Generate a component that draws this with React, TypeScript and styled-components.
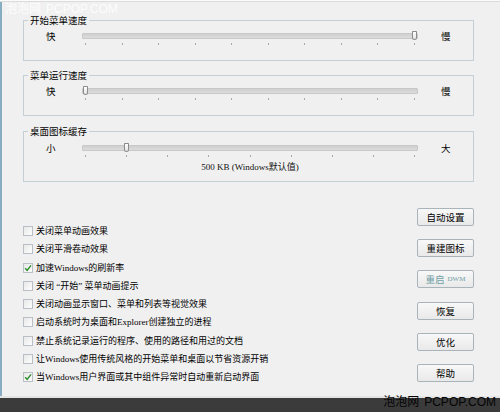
import React from "react";
import styled, { createGlobalStyle } from "styled-components";

const Global = createGlobalStyle`
  html, body { margin: 0; padding: 0; background: #f0f0f0; }
  body {
    width: 500px; height: 412px; overflow: hidden;
    font-family: "Liberation Serif", "Noto Sans CJK SC", serif;
    color: #151515;
  }
`;

const Window = styled.div`
  position: relative;
  width: 500px;
  height: 412px;
  display: flex;
  flex-direction: column;
  background: #f0f0f0;
  overflow: hidden;
`;

const TopEdge = styled.div`
  height: 1px;
  background: #fbfbfb;
  border-bottom: 1px solid #dcdcdc;
`;

const Body = styled.div`
  flex: 1;
  border-left: 2px solid #86adc1;
  padding: 12px 0 0 21px;
  display: flex;
  flex-direction: column;
`;

const BottomEdge = styled.div`
  height: 2px;
  background: #e4e4e4;
`;

const DarkBar = styled.div`
  height: 14px;
  background: #3b3b3b;
`;

const Group = styled.fieldset<{ $mt?: number }>`
  margin: ${(p) => p.$mt ?? 0}px 0 0 0;
  padding: 0;
  width: 451px;
  box-sizing: border-box;
  border: 1px solid #c3ced5;
  min-width: 0;
`;

const Legend = styled.legend`
  margin-left: 4px;
  padding: 0 2px;
  font-family: "Noto Sans CJK SC", sans-serif;
  font-size: 9.5px;
  line-height: 12px;
  color: #000;
`;

const SliderRow = styled.div<{ $pt: number; $pb: number }>`
  display: flex;
  align-items: flex-start;
  padding: ${(p) => p.$pt}px 0 ${(p) => p.$pb}px 22px;
`;

const EndLabel = styled.span<{ $ml: number }>`
  width: 9px;
  margin-left: ${(p) => p.$ml}px;
  margin-top: -1px;
  font-family: "Noto Sans CJK SC", sans-serif;
  font-size: 9.5px;
  line-height: 9px;
  color: #000;
  white-space: nowrap;
`;

const SliderCol = styled.div`
  width: 336px;
  margin-left: 27px;
  display: flex;
  flex-direction: column;
`;

const TrackWrap = styled.div`
  position: relative;
  height: 6px;
`;

const Track = styled.div`
  height: 6px;
  box-sizing: border-box;
  border: 1px solid #c8c8c8;
  border-radius: 1px;
  background: linear-gradient(#cfcfcf, #dcdcdc);
`;

const Thumb = styled.div`
  position: absolute;
  top: -2px;
  width: 5px;
  height: 9px;
  box-sizing: border-box;
  border: 1px solid #8c8c8c;
  border-radius: 1px 1px 3px 3px;
  background: linear-gradient(#ffffff, #e4e4e4);
`;

const Ticks = styled.div`
  margin-top: 4px;
  padding: 0 3px;
  display: flex;
  justify-content: space-between;
`;

const Tick = styled.span`
  width: 1px;
  height: 2px;
  background: #a8a8a8;
`;

const ValueText = styled.div`
  margin-top: 5px;
  text-align: center;
  font-size: 9px;
  line-height: 10px;
  color: #111;
  white-space: nowrap;
`;

const Lower = styled.div`
  display: flex;
  width: 451px;
  margin-top: 26px;
`;

const CheckList = styled.div`
  display: flex;
  flex-direction: column;
  padding-top: 14px;
`;

const CheckRow = styled.label`
  height: 18.25px;
  display: flex;
  align-items: center;
  gap: 3px;
  font-size: 9px;
  line-height: 10px;
  color: #000;
  white-space: nowrap;
`;

const Box = styled.span`
  width: 10px;
  height: 10px;
  box-sizing: border-box;
  border: 1px solid #b9bfc5;
  background: linear-gradient(135deg, #e8e8e8, #fdfdfd);
  display: flex;
  align-items: center;
  justify-content: center;
`;

const Buttons = styled.div`
  margin-left: auto;
  width: 57px;
  display: flex;
  flex-direction: column;
  gap: 13.2px;
`;

const Btn = styled.button<{ $disabled?: boolean }>`
  height: 18px;
  padding: 0;
  box-sizing: border-box;
  border: 1px solid #a9b3ba;
  border-radius: 2px;
  background: linear-gradient(#f8f8f8, #e9e9e9);
  font-family: "Noto Sans CJK SC", sans-serif;
  font-size: 9.5px;
  line-height: 10px;
  color: ${(p) => (p.$disabled ? "#6f9ea6" : "#000")};
  display: flex;
  align-items: center;
  justify-content: center;
  gap: 3px;
`;

const Small = styled.span`
  font-family: "Liberation Serif", serif;
  font-size: 7px;
`;

const Watermark = styled.div<{ $dark?: boolean }>`
  position: absolute;
  display: flex;
  align-items: baseline;
  gap: 5px;
  font-family: "Liberation Sans", "Noto Sans CJK SC", sans-serif;
  font-size: 12px;
  line-height: 13px;
  white-space: nowrap;
  color: ${(p) => (p.$dark ? "#050505" : "rgba(255,255,255,0.85)")};
`;

const Check = () => (
  <svg width="8" height="8" viewBox="0 0 8 8">
    <path d="M1.2 4.2 L3.2 6.4 L7 1.4" fill="none" stroke="#2e8f2e" strokeWidth="1.5" />
  </svg>
);

type SliderProps = { ticks: number; index: number };
const Slider = ({ ticks, index }: SliderProps) => {
  const span = 329;
  const left = 3 + (index / (ticks - 1)) * span - 2;
  return (
    <>
      <TrackWrap>
        <Track />
        <Thumb style={{ left }} />
      </TrackWrap>
      <Ticks>
        {Array.from({ length: ticks }).map((_, i) => (
          <Tick key={i} />
        ))}
      </Ticks>
    </>
  );
};

const checks: { text: string; on?: boolean }[] = [
  { text: "关闭菜单动画效果" },
  { text: "关闭平滑卷动效果" },
  { text: "加速Windows的刷新率", on: true },
  { text: "关闭 “开始” 菜单动画提示" },
  { text: "关闭动画显示窗口、菜单和列表等视觉效果" },
  { text: "启动系统时为桌面和Explorer创建独立的进程" },
  { text: "禁止系统记录运行的程序、使用的路径和用过的文档" },
  { text: "让Windows使用传统风格的开始菜单和桌面以节省资源开销" },
  { text: "当Windows用户界面或其中组件异常时自动重新启动界面", on: true },
];

export default function App() {
  return (
    <Window>
      <Global />
      <TopEdge />
      <Body>
        <Group>
          <Legend>开始菜单速度</Legend>
          <SliderRow $pt={7} $pb={15}>
            <EndLabel $ml={0}>快</EndLabel>
            <SliderCol>
              <Slider ticks={10} index={9} />
            </SliderCol>
            <EndLabel $ml={23}>慢</EndLabel>
          </SliderRow>
        </Group>
        <Group $mt={8}>
          <Legend>菜单运行速度</Legend>
          <SliderRow $pt={7} $pb={15}>
            <EndLabel $ml={0}>快</EndLabel>
            <SliderCol>
              <Slider ticks={10} index={0} />
            </SliderCol>
            <EndLabel $ml={23}>慢</EndLabel>
          </SliderRow>
        </Group>
        <Group $mt={9}>
          <Legend>桌面图标缓存</Legend>
          <SliderRow $pt={8} $pb={9}>
            <EndLabel $ml={0}>小</EndLabel>
            <SliderCol>
              <Slider ticks={9} index={1} />
              <ValueText>500 KB (Windows默认值)</ValueText>
            </SliderCol>
            <EndLabel $ml={23}>大</EndLabel>
          </SliderRow>
        </Group>
        <Lower>
          <CheckList>
            {checks.map((c) => (
              <CheckRow key={c.text}>
                <Box>{c.on && <Check />}</Box>
                {c.text}
              </CheckRow>
            ))}
          </CheckList>
          <Buttons>
            <Btn>自动设置</Btn>
            <Btn>重建图标</Btn>
            <Btn $disabled>
              重启 <Small>DWM</Small>
            </Btn>
            <Btn>恢复</Btn>
            <Btn>优化</Btn>
            <Btn>帮助</Btn>
          </Buttons>
        </Lower>
      </Body>
      <BottomEdge />
      <DarkBar />
      <Watermark style={{ left: 5, top: 3 }}>
        <span>泡泡网</span>
        <span>PCPOP.COM</span>
      </Watermark>
      <Watermark $dark style={{ right: 4, top: 396 }}>
        <span>泡泡网</span>
        <span>PCPOP.COM</span>
      </Watermark>
    </Window>
  );
}
